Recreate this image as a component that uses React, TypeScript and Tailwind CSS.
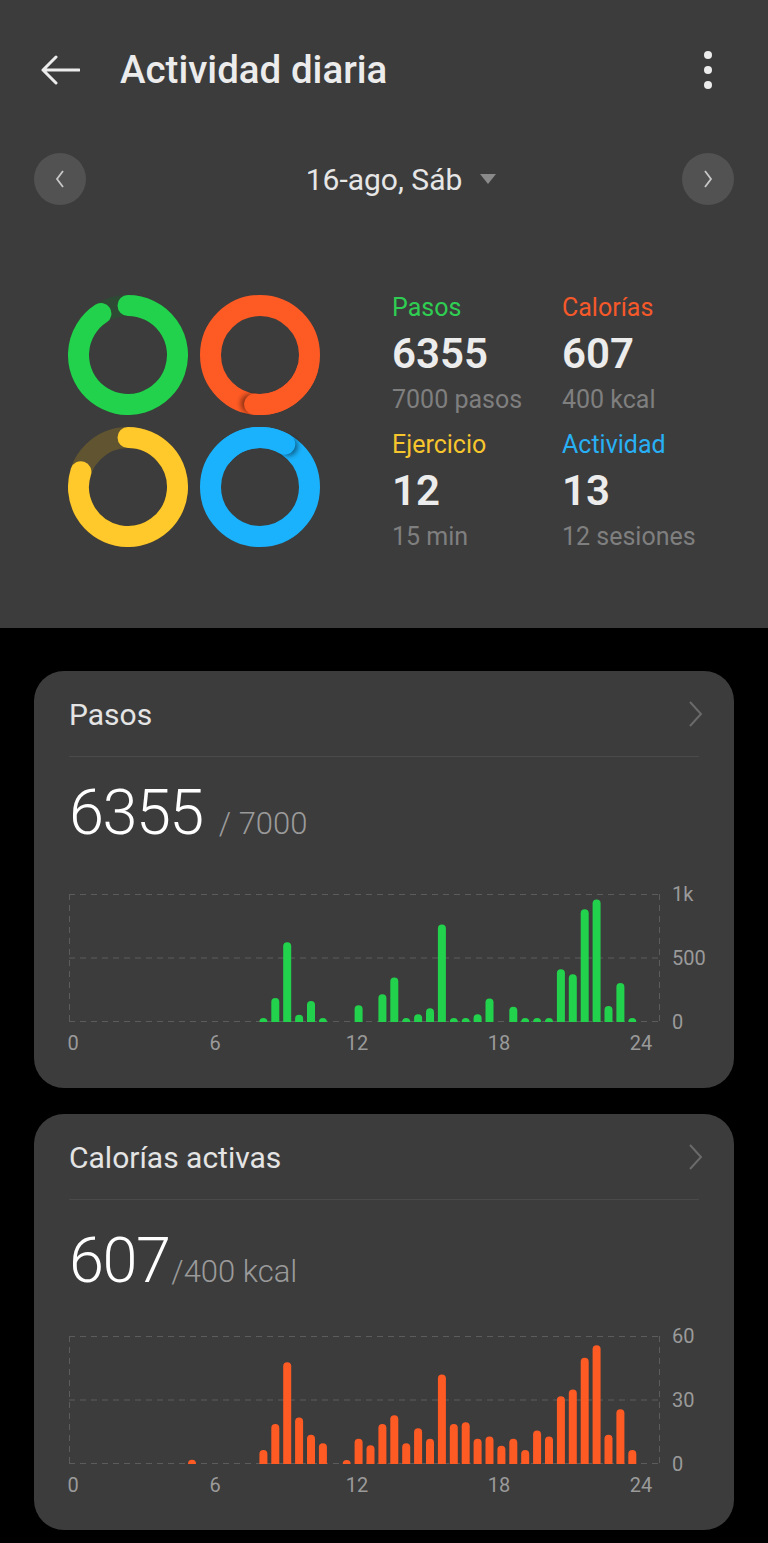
import React from 'react';

const GREEN = '#22d24c';
const ORANGE = '#fe5a24';
const YELLOW = '#ffc92b';
const BLUE = '#1ab2fd';

const steps: Record<number, number> = {
  16: 26, 17: 188, 18: 624, 19: 57, 20: 164, 21: 26, 24: 130, 26: 217, 27: 347, 28: 26,
  29: 60, 30: 107, 31: 762, 32: 26, 33: 26, 34: 60, 35: 183, 37: 120, 38: 26, 39: 26,
  40: 26, 41: 412, 42: 373, 43: 880, 44: 958, 45: 125, 46: 305, 47: 26,
};

const calories: Record<number, number> = {
  10: 2, 16: 6.6, 17: 18.7, 18: 47.7, 19: 21.8, 20: 13.7, 21: 9.7, 23: 1.5, 24: 11.8, 25: 8.8,
  26: 18.7, 27: 22.8, 28: 9.7, 29: 16.8, 30: 11.8, 31: 41.9, 32: 18.7, 33: 19.6, 34: 11.8,
  35: 12.9, 36: 8.6, 37: 11.8, 38: 6.6, 39: 15.7, 40: 12.9, 41: 31.7, 42: 34.9, 43: 49.8,
  44: 55.7, 45: 13.7, 46: 25.7, 47: 6.6,
};

function Ring({ color, track, value, id }: { color: string; track: string; value: number; id: string }) {
  const c = 60;
  const r = 49.5;
  const sw = 21;
  const pt = (deg: number) => {
    const a = (deg * Math.PI) / 180;
    return [c + r * Math.sin(a), c - r * Math.cos(a)];
  };
  const arc = (from: number, to: number) => {
    const [x1, y1] = pt(from);
    const [x2, y2] = pt(to);
    const large = to - from > 180 ? 1 : 0;
    return `M ${x1} ${y1} A ${r} ${r} 0 ${large} 1 ${x2} ${y2}`;
  };
  const over = value > 1;
  const end = over ? (value - 1) * 360 : value * 360;
  const [sx, sy] = pt(end + 5);

  return (
    <svg width="120" height="120" viewBox="0 0 120 120">
      <defs>
        <filter id={id} x="-50%" y="-50%" width="200%" height="200%">
          <feGaussianBlur stdDeviation="2.5" />
        </filter>
      </defs>
      {over ? (
        <>
          <circle cx={c} cy={c} r={r} fill="none" stroke={color} strokeWidth={sw} />
          <circle cx={sx} cy={sy} r={sw / 2 - 1} fill="rgba(0,0,0,0.45)" filter={`url(#${id})`} />
          <path d={arc(end - 80, end)} fill="none" stroke={color} strokeWidth={sw} strokeLinecap="round" />
        </>
      ) : (
        <>
          <circle cx={c} cy={c} r={r} fill="none" stroke={track} strokeWidth={sw} />
          <path d={arc(0, end)} fill="none" stroke={color} strokeWidth={sw} strokeLinecap="round" />
        </>
      )}
    </svg>
  );
}

function Stat({ label, color, value, sub }: { label: string; color: string; value: string; sub: string }) {
  return (
    <div className="w-[170px]">
      <div className={`text-[25px] leading-[30px] ${color}`}>{label}</div>
      <div className="mt-[6px] text-[42px] leading-[50px] font-semibold text-[#ececec]">{value}</div>
      <div className="mt-[6px] text-[25px] leading-[30px] text-[#7f7f7f]">{sub}</div>
    </div>
  );
}

function Chart({ data, max, color, labels }: { data: Record<number, number>; max: number; color: string; labels: string[] }) {
  const W = 591;
  const H = 128;
  const bars = Object.entries(data).map(([k, v]) => {
    const i = Number(k);
    const cx = 4 + i * 11.9;
    const h = Math.max((v / max) * H, 4);
    const x = cx - 4;
    const y = H - h;
    const d = `M ${x} ${H} L ${x} ${y + 4} A 4 4 0 0 1 ${x + 8} ${y + 4} L ${x + 8} ${H} Z`;
    return <path key={k} d={d} fill={color} />;
  });
  const dash = '#5c5c5c';
  return (
    <div>
      <div className="flex">
        <svg width={W} height={H} viewBox={`0 0 ${W} ${H}`} className="overflow-visible">
          <line x1="0.5" y1="0" x2="0.5" y2={H} stroke={dash} strokeDasharray="6 5" />
          <line x1={W - 0.5} y1="0" x2={W - 0.5} y2={H} stroke={dash} strokeDasharray="6 5" />
          <line x1="0" y1="0.5" x2={W} y2="0.5" stroke={dash} strokeDasharray="6 5" />
          <line x1="0" y1={H / 2} x2={W} y2={H / 2} stroke={dash} strokeDasharray="6 5" />
          <line x1="0" y1={H - 0.5} x2={W} y2={H - 0.5} stroke={dash} strokeDasharray="6 5" />
          {bars}
        </svg>
        <div className="ml-[12px] h-[128px] flex flex-col justify-between text-[20px] leading-[24px] text-[#9a9a9a]">
          {labels.map((l) => (
            <span key={l} className="-my-[12px]">{l}</span>
          ))}
        </div>
      </div>
      <div className="-ml-[16px] mt-[9px] w-[608px] flex justify-between text-[20px] leading-[24px] text-[#9a9a9a]">
        {['0', '6', '12', '18', '24'].map((t) => (
          <span key={t} className="w-[40px] text-center">{t}</span>
        ))}
      </div>
    </div>
  );
}

function Card({ title, children }: { title: string; children: React.ReactNode }) {
  return (
    <div className="mx-[34px] rounded-[30px] bg-[#3c3c3c] px-[35px] pt-[23px] pb-[33px]">
      <div className="flex items-center justify-between h-[40px]">
        <span className="text-[30px] text-[#e4e4e4]">{title}</span>
        <svg width="16" height="28" viewBox="0 0 16 28" className="mr-[-4px]">
          <path d="M3 2 L14 14 L3 26" fill="none" stroke="#6a6a6a" strokeWidth="2" />
        </svg>
      </div>
      <div className="mt-[22px] h-px bg-[#4a4a4a]" />
      {children}
    </div>
  );
}

export default function App() {
  return (
    <div className="min-h-[1543px] w-[768px] bg-black font-[Roboto,sans-serif]">
      <div className="bg-[#3c3c3c] pt-[42px] pb-[76px]">
        <div className="flex items-center h-[56px] px-[40px]">
          <svg width="40" height="30" viewBox="0 0 40 30">
            <path d="M39 15 H3 M16 2 L3 15 L16 28" fill="none" stroke="#ececec" strokeWidth="3" strokeLinecap="round" strokeLinejoin="round" />
          </svg>
          <h1 className="ml-[40px] text-[38.5px] font-medium text-[#ececec]">Actividad diaria</h1>
          <div className="ml-auto mr-[16px] flex flex-col gap-[7px]">
            <span className="block w-[8px] h-[8px] rounded-full bg-[#ececec]" />
            <span className="block w-[8px] h-[8px] rounded-full bg-[#ececec]" />
            <span className="block w-[8px] h-[8px] rounded-full bg-[#ececec]" />
          </div>
        </div>

        <div className="mt-[55px] flex items-center justify-between px-[34px]">
          <div className="w-[52px] h-[52px] rounded-full bg-[#525252] flex items-center justify-center">
            <svg width="12" height="20" viewBox="0 0 12 20">
              <path d="M9 2 L3 10 L9 18" fill="none" stroke="#c8c8c8" strokeWidth="1.8" />
            </svg>
          </div>
          <div className="flex items-center gap-[18px] text-[30px] text-[#e6e6e6]">
            <span className="w-[16px]" />
            <span>16-ago, Sáb</span>
            <svg width="16" height="12" viewBox="0 0 16 12">
              <path d="M0 1 H16 L8 11 Z" fill="#8a8a8a" />
            </svg>
          </div>
          <div className="w-[52px] h-[52px] rounded-full bg-[#525252] flex items-center justify-center">
            <svg width="12" height="20" viewBox="0 0 12 20">
              <path d="M3 2 L9 10 L3 18" fill="none" stroke="#c8c8c8" strokeWidth="1.8" />
            </svg>
          </div>
        </div>

        <div className="mt-[90px] flex items-start">
          <div className="ml-[68px] grid grid-cols-2 gap-x-[12px] gap-y-[12px]">
            <Ring id="g" color={GREEN} track="#2e4a35" value={6355 / 7000} />
            <Ring id="o" color={ORANGE} track="#5a3a2e" value={607 / 400} />
            <Ring id="y" color={YELLOW} track="#615430" value={12 / 15} />
            <Ring id="b" color={BLUE} track="#2a4a5c" value={13 / 12} />
          </div>
          <div className="ml-[72px] -mt-[2px]">
            <div className="flex">
              <Stat label="Pasos" color="text-[#2fce52]" value="6355" sub="7000 pasos" />
              <Stat label="Calorías" color="text-[#f5592a]" value="607" sub="400 kcal" />
            </div>
            <div className="flex mt-[15px]">
              <Stat label="Ejercicio" color="text-[#f7c52c]" value="12" sub="15 min" />
              <Stat label="Actividad" color="text-[#28b0f5]" value="13" sub="12 sesiones" />
            </div>
          </div>
        </div>
      </div>

      <div className="pt-[43px] pb-[12px] flex flex-col gap-[26px]">
        <Card title="Pasos">
          <div className="mt-[21px] flex items-baseline h-[70px] font-light">
            <span className="text-[63px] tracking-[-1.5px] text-white leading-[70px]">6355</span>
            <span className="ml-[16px] text-[31px] text-[#9a9a9a]">/ 7000</span>
          </div>
          <div className="mt-[46px]">
            <Chart data={steps} max={1000} color={GREEN} labels={['1k', '500', '0']} />
          </div>
        </Card>
        <Card title="Calorías activas">
          <div className="mt-[26px] flex items-baseline h-[70px] font-light">
            <span className="text-[63px] tracking-[-1.5px] text-white leading-[70px]">607</span>
            <span className="ml-[2px] text-[31px] text-[#9a9a9a]">/400 kcal</span>
          </div>
          <div className="mt-[40px]">
            <Chart data={calories} max={60} color={ORANGE} labels={['60', '30', '0']} />
          </div>
        </Card>
      </div>
    </div>
  );
}
